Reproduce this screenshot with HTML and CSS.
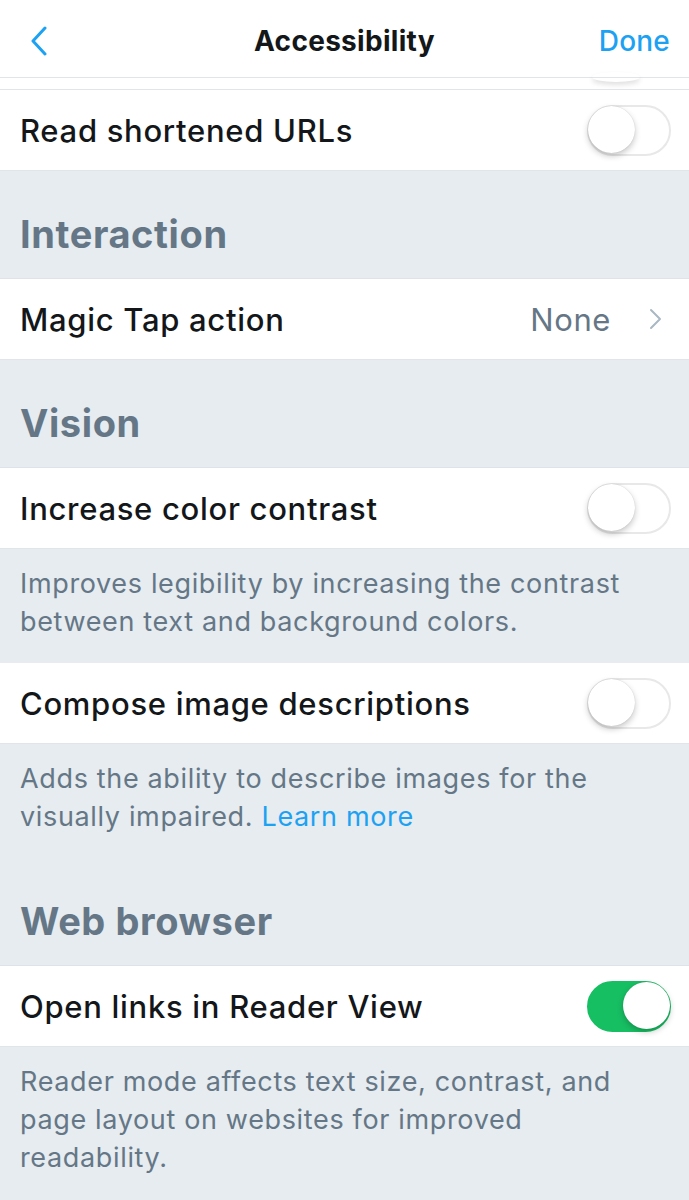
FILE: index.html
```html
<!DOCTYPE html>
<html lang="en">
<head>
<meta charset="utf-8">
<title>Accessibility</title>
<link rel="stylesheet" href="styles.css">
</head>
<body>
<div class="screen">
  <header class="nav">
    <button class="nav-back" aria-label="Back">
      <svg width="18" height="30" viewBox="0 0 18 30"><path d="M15 2 L3 15 L15 28" fill="none" stroke="#1da1f2" stroke-width="3" stroke-linecap="round" stroke-linejoin="round"/></svg>
    </button>
    <h1 class="nav-title">Accessibility</h1>
    <button class="nav-done">Done</button>
  </header>

  <div class="row-stub"><span class="stub-shadow"></span></div>

  <div class="row">
    <span class="row-label">Read shortened URLs</span>
    <span class="toggle"><span class="knob"></span></span>
  </div>

  <div class="section-header"><h2>Interaction</h2></div>

  <div class="row">
    <span class="row-label">Magic Tap action</span>
    <span class="row-value">None</span>
    <svg class="chev" width="14" height="22" viewBox="0 0 14 22"><path d="M2 2 L11 11 L2 20" fill="none" stroke="#aab8c2" stroke-width="2" stroke-linecap="round" stroke-linejoin="round"/></svg>
  </div>

  <div class="section-header"><h2>Vision</h2></div>

  <div class="row">
    <span class="row-label">Increase color contrast</span>
    <span class="toggle"><span class="knob"></span></span>
  </div>
  <p class="desc">Improves legibility by increasing the contrast between text and background colors.</p>

  <div class="row">
    <span class="row-label">Compose image descriptions</span>
    <span class="toggle"><span class="knob"></span></span>
  </div>
  <p class="desc">Adds the ability to describe images for the visually impaired. <a class="link" href="#">Learn more</a></p>

  <div class="section-header"><h2>Web browser</h2></div>

  <div class="row">
    <span class="row-label">Open links in Reader View</span>
    <span class="toggle on"><span class="knob"></span></span>
  </div>
  <p class="desc">Reader mode affects text size, contrast, and page layout on websites for improved readability.</p>
</div>
</body>
</html>
```

FILE: styles.css
```css
* { box-sizing: border-box; }
html, body { margin: 0; padding: 0; }
body {
  background: #e6ecf0;
  font-family: Inter, "Noto Sans", "Liberation Sans", sans-serif;
  color: #14171a;
}
.screen {
  width: 689px;
  min-height: 1200px;
  background: #e6ecf0;
  overflow: hidden;
}
.nav {
  height: 78px;
  background: #fff;
  border-bottom: 1px solid #e1e5e8;
  display: flex;
  align-items: center;
  justify-content: space-between;
  padding: 5px 19px 0 30px;
  position: relative;
}
.nav-back {
  border: 0; background: none; padding: 0;
  width: 20px; height: 30px;
  display: flex; align-items: center;
}
.nav-title {
  position: absolute;
  left: 0; right: 0;
  top: 5px; bottom: 0;
  display: flex;
  align-items: center;
  justify-content: center;
  margin: 0;
  font-size: 28px;
  font-weight: 700;
  letter-spacing: 0.3px;
  pointer-events: none;
}
.nav-done {
  border: 0; background: none; padding: 0;
  font-family: inherit;
  font-size: 28px;
  font-weight: 500;
  letter-spacing: 0.2px;
  color: #1da1f2;
}
.row-stub {
  height: 12px;
  background: #fff;
  border-bottom: 1px solid #e1e5e8;
  position: relative;
}
.stub-shadow {
  position: absolute;
  left: 592px; top: -6px;
  width: 48px; height: 10px;
  border-radius: 50%;
  box-shadow: 0 3px 5px rgba(0,0,0,0.12);
}
.row {
  height: 81px;
  background: #fff;
  border-bottom: 1px solid #e1e5e8;
  display: flex;
  align-items: center;
  padding: 0 18px 0 20px;
}
.row-label {
  flex: 1;
  font-size: 31px;
  font-weight: 500;
  letter-spacing: 0.7px;
}
.row-value {
  font-size: 31px;
  letter-spacing: 0.6px;
  color: #657786;
  margin-right: 38px;
}
.chev { margin-right: 8px; }
.toggle {
  width: 84px; height: 51px;
  border-radius: 26px;
  border: 2px solid #e8e8e8;
  background: #fff;
  position: relative;
  flex: none;
}
.toggle .knob {
  position: absolute;
  top: -1px; left: -1px;
  width: 47px; height: 47px;
  border-radius: 50%;
  background: #fff;
  box-shadow: 0 3px 6px rgba(0,0,0,0.22), 0 0 1px rgba(0,0,0,0.2);
}
.toggle.on {
  background: #17bf63;
  border-color: #17bf63;
}
.toggle.on .knob { left: auto; right: -1px; }
.section-header {
  height: 108px;
  display: flex;
  align-items: flex-end;
  padding: 0 20px 21px;
  border-bottom: 1px solid #dde3e8;
}
.section-header h2 {
  margin: 0;
  font-size: 38px;
  line-height: 46px;
  font-weight: 700;
  color: #657786;
  letter-spacing: 0.6px;
}
.desc {
  margin: 0;
  padding: 16px 20px 22px;
  font-size: 27px;
  line-height: 38px;
  letter-spacing: 0.65px;
  color: #657786;
}
.link { color: #1da1f2; text-decoration: none; }
```
